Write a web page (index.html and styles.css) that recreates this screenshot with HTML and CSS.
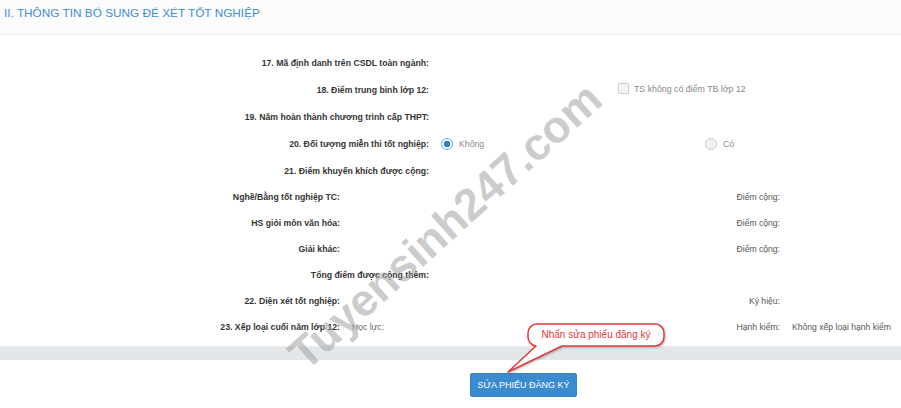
FILE: index.html
```html
<!DOCTYPE html>
<html lang="vi">
<head>
<meta charset="utf-8">
<title>Thông tin bổ sung</title>
<link rel="stylesheet" href="styles.css">
</head>
<body>
<div class="page">
  <div class="section-head">II. THÔNG TIN BỔ SUNG ĐỂ XÉT TỐT NGHIỆP</div>
  <div class="form">
    <div class="row main"><div class="lbl">17. Mã định danh trên CSDL toàn ngành:</div><div class="val"></div></div>
    <div class="row main"><div class="lbl">18. Điểm trung bình lớp 12:</div><div class="val check-wrap"><span class="check"><span class="box"></span>TS không có điểm TB lớp 12</span></div></div>
    <div class="row main"><div class="lbl">19. Năm hoàn thành chương trình cấp THPT:</div><div class="val"></div></div>
    <div class="row main"><div class="lbl">20. Đối tượng miễn thi tốt nghiệp:</div><div class="val radios"><span class="radio"><span class="dot on"></span>Không</span><span class="radio"><span class="dot"></span>Có</span></div></div>
    <div class="row main"><div class="lbl">21. Điểm khuyến khích được cộng:</div><div class="val"></div></div>
    <div class="row sub"><div class="lbl">Nghề/Bằng tốt nghiệp TC:</div><div class="val"></div><div class="rlbl">Điểm cộng:</div><div class="rval"></div></div>
    <div class="row sub"><div class="lbl">HS giỏi môn văn hóa:</div><div class="val"></div><div class="rlbl">Điểm cộng:</div><div class="rval"></div></div>
    <div class="row sub"><div class="lbl">Giải khác:</div><div class="val"></div><div class="rlbl">Điểm cộng:</div><div class="rval"></div></div>
    <div class="row main short"><div class="lbl">Tổng điểm được cộng thêm:</div><div class="val"></div></div>
    <div class="row sub"><div class="lbl">22. Diện xét tốt nghiệp:</div><div class="val"></div><div class="rlbl">Ký hiệu:</div><div class="rval"></div></div>
    <div class="row sub"><div class="lbl">23. Xếp loại cuối năm lớp 12:</div><div class="val plain">Học lực:</div><div class="rlbl">Hạnh kiểm:</div><div class="rval">Không xếp loại hạnh kiểm</div></div>
  </div>
  <div class="bar"></div>
  <div class="actions"><button class="btn" type="button">SỬA PHIẾU ĐĂNG KÝ</button></div>

  <div class="callout">
    <svg class="callout-shape" width="175" height="60" viewBox="0 0 175 60">
      <path d="M37 6 H155 A9 9 0 0 1 164 15 V19 A9 9 0 0 1 155 28 H62 L8 54 L36 28 A9 9 0 0 1 28 19 V15 A9 9 0 0 1 37 6 Z" fill="#ffffff" stroke="#e23a3a" stroke-width="1.5" stroke-linejoin="round"/>
    </svg>
    <span class="callout-text">Nhấn sửa phiếu đăng ký</span>
  </div>

  <div class="watermark">Tuyensinh247.com</div>
</div>
</body>
</html>
```

FILE: styles.css
```css
* { box-sizing: border-box; }

body {
  margin: 0;
  background: #ffffff;
  font-family: "Liberation Sans", Arial, sans-serif;
  color: #333;
}

.page {
  position: relative;
  width: 901px;
  height: 408px;
  overflow: hidden;
  background: #ffffff;
}

.section-head {
  height: 35px;
  padding: 0 0 0 4px;
  line-height: 27px;
  font-size: 11.8px;
  color: #3d8ed3;
  background: #fcfcfc;
  border-bottom: 2px solid #f0f1f2;
}

.form {
  padding-top: 14px;
  background: #ffffff;
}

.row {
  display: grid;
  align-items: center;
}

.row.main {
  grid-template-columns: 429px 1fr;
  column-gap: 12px;
  height: 27px;
}

.row.main.short {
  height: 26px;
}

.row.sub {
  grid-template-columns: 340px 336px 80px 1fr;
  column-gap: 12px;
  height: 26px;
}

.lbl {
  text-align: right;
  font-weight: bold;
  font-size: 8.7px;
  color: #333;
  white-space: nowrap;
}

.val, .rval {
  font-size: 8.6px;
  color: #555;
  white-space: nowrap;
}

.val.plain {
  color: #666;
}

.rlbl {
  text-align: right;
  font-size: 8.6px;
  color: #555;
  white-space: nowrap;
}

.check-wrap {
  padding-left: 177px;
}

.check {
  display: inline-flex;
  align-items: center;
  font-size: 8.8px;
  color: #888;
}

.box {
  display: inline-block;
  width: 11px;
  height: 11px;
  margin-right: 5px;
  border: 1px solid #cfcfcf;
  background: #f3f3f3;
  border-radius: 1px;
}

.radios {
  display: grid;
  grid-template-columns: 264px 1fr;
}

.radio {
  display: inline-flex;
  align-items: center;
  font-size: 8.7px;
  color: #888;
}

.dot {
  display: inline-block;
  width: 12px;
  height: 12px;
  margin-right: 6px;
  border-radius: 50%;
  border: 1px solid #cccccc;
  background: #f2f2f2;
}

.dot.on {
  border: 1.5px solid #6ea9e0;
  background: radial-gradient(circle, #2f80d0 0 3px, #ffffff 3.6px);
}

.bar {
  height: 14px;
  margin-top: 6px;
  background: #e4e7ea;
  border-top: 1px solid #eceef0;
}

.actions {
  padding: 13px 0 0 470px;
}

.btn {
  width: 107px;
  height: 24px;
  padding: 0;
  border: 1px solid #3582c4;
  border-radius: 2px;
  background: #3b8bd0;
  color: #ffffff;
  font-family: "Liberation Sans", Arial, sans-serif;
  font-size: 9px;
  cursor: pointer;
}

.callout {
  position: absolute;
  left: 500px;
  top: 318px;
  width: 175px;
  height: 60px;
}

.callout-shape {
  position: absolute;
  left: 0;
  top: 0;
  filter: drop-shadow(1px 1px 1px rgba(0, 0, 0, 0.25));
}

.callout-text {
  position: absolute;
  left: 28px;
  top: 6px;
  width: 136px;
  height: 22px;
  line-height: 21px;
  text-align: center;
  font-size: 10px;
  color: #e23a3a;
}

.watermark {
  position: absolute;
  left: 445px;
  top: 226px;
  transform: translate(-50%, -50%) rotate(-42deg);
  font-size: 45px;
  font-weight: bold;
  line-height: 1;
  color: rgba(160, 160, 160, 0.55);
  white-space: nowrap;
  pointer-events: none;
}
```
